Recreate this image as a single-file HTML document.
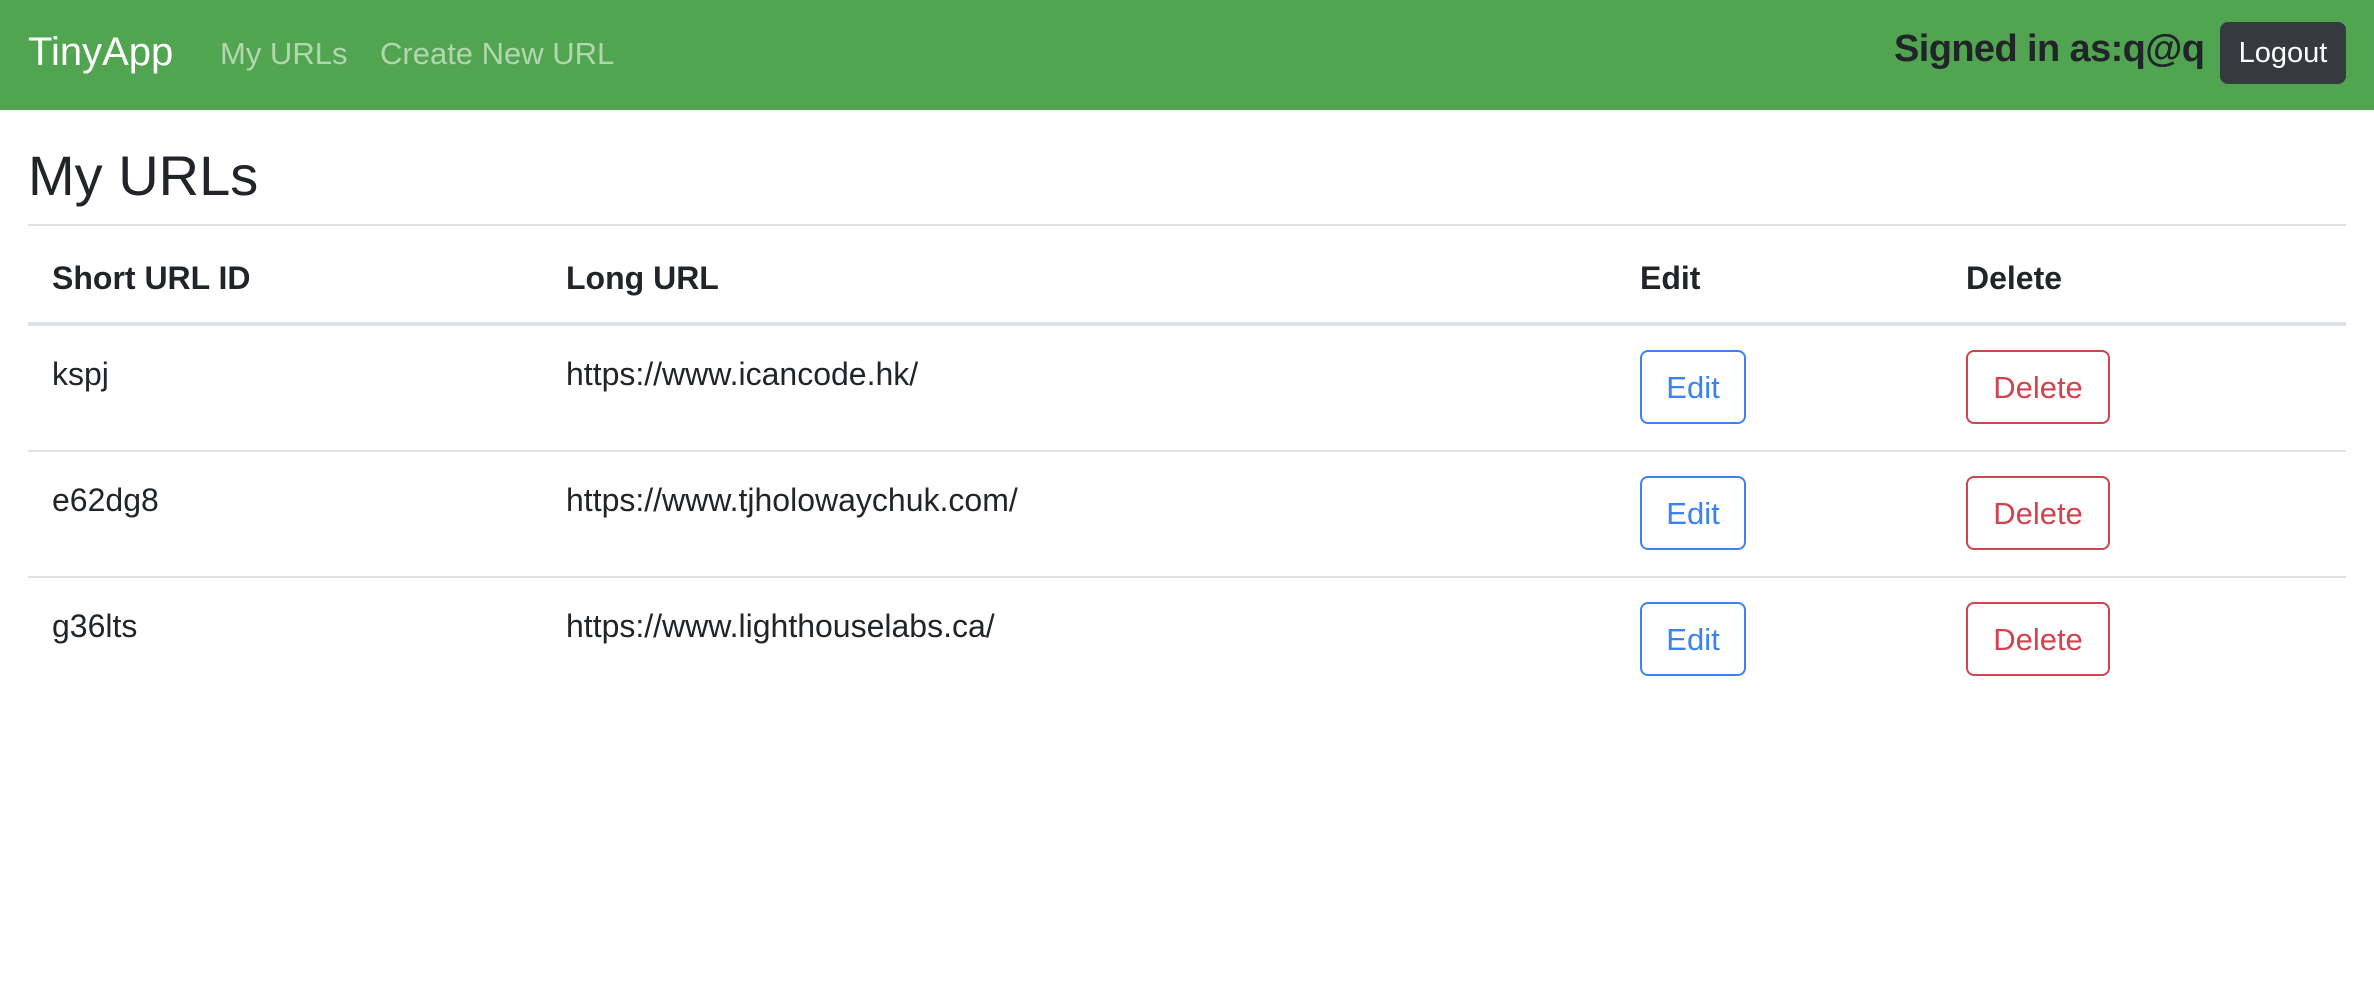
<!DOCTYPE html>
<html><head><meta charset="utf-8">
<style>
html,body{margin:0;padding:0;background:#fff;width:2374px;height:992px;overflow:hidden}
#w{zoom:2;width:1187px;height:496px;position:relative;font-family:"Liberation Sans",Arial,sans-serif;color:#212529}
.nav{position:absolute;left:0;top:0;width:1187px;height:55px;background:#52a550}
.a{position:absolute;white-space:nowrap}
.brand{left:14px;top:15px;font-size:20px;color:#fff}
.lk{top:18px;font-size:15.5px;color:rgba(255,255,255,.55)}
.sig{left:947px;top:14px;font-size:19px;font-weight:bold;letter-spacing:-0.3px;color:#212529}
.lo{position:absolute;left:1110px;top:11px;width:63px;height:31px;background:#343a40;border-radius:4px;color:#fff;font-size:14.5px;text-align:center;line-height:31px}
h1{position:absolute;left:14px;top:74px;margin:0;font-size:28px;font-weight:normal;line-height:1}
.ln{position:absolute;left:14px;width:1159px;height:1px;background:#dee2e6}
.th{font-weight:bold;font-size:16px;top:130px}
.td{font-size:16px}
.btn{position:absolute;height:35px;border:1px solid;border-radius:4px;font-size:15.5px;text-align:center;line-height:36px;box-sizing:content-box}
.e{left:820px;width:51px;border-color:#3b82f6;color:#3b82f6}
.d{left:983px;width:70px;border-color:#d0444f;color:#d0444f}
</style></head><body><div id="w">
<div class="nav"></div>
<div class="a brand">TinyApp</div>
<div class="a lk" style="left:110px">My URLs</div>
<div class="a lk" style="left:190px">Create New URL</div>
<div class="a sig">Signed in as:q@q</div>
<div class="lo">Logout</div>
<h1>My URLs</h1>
<div class="ln" style="top:112px"></div>
<div class="a th" style="left:26px">Short URL ID</div>
<div class="a th" style="left:283px">Long URL</div>
<div class="a th" style="left:820px">Edit</div>
<div class="a th" style="left:983px">Delete</div>
<div class="ln" style="top:161px;height:2px"></div>

<div class="a td" style="left:26px;top:178px">kspj</div>
<div class="a td" style="left:283px;top:178px">https://www.icancode.hk/</div>
<div class="btn e" style="top:175px">Edit</div>
<div class="btn d" style="top:175px">Delete</div>
<div class="ln" style="top:225px"></div>

<div class="a td" style="left:26px;top:241px">e62dg8</div>
<div class="a td" style="left:283px;top:241px">https://www.tjholowaychuk.com/</div>
<div class="btn e" style="top:238px">Edit</div>
<div class="btn d" style="top:238px">Delete</div>
<div class="ln" style="top:288px"></div>

<div class="a td" style="left:26px;top:304px">g36lts</div>
<div class="a td" style="left:283px;top:304px">https://www.lighthouselabs.ca/</div>
<div class="btn e" style="top:301px">Edit</div>
<div class="btn d" style="top:301px">Delete</div>
</div></body></html>
